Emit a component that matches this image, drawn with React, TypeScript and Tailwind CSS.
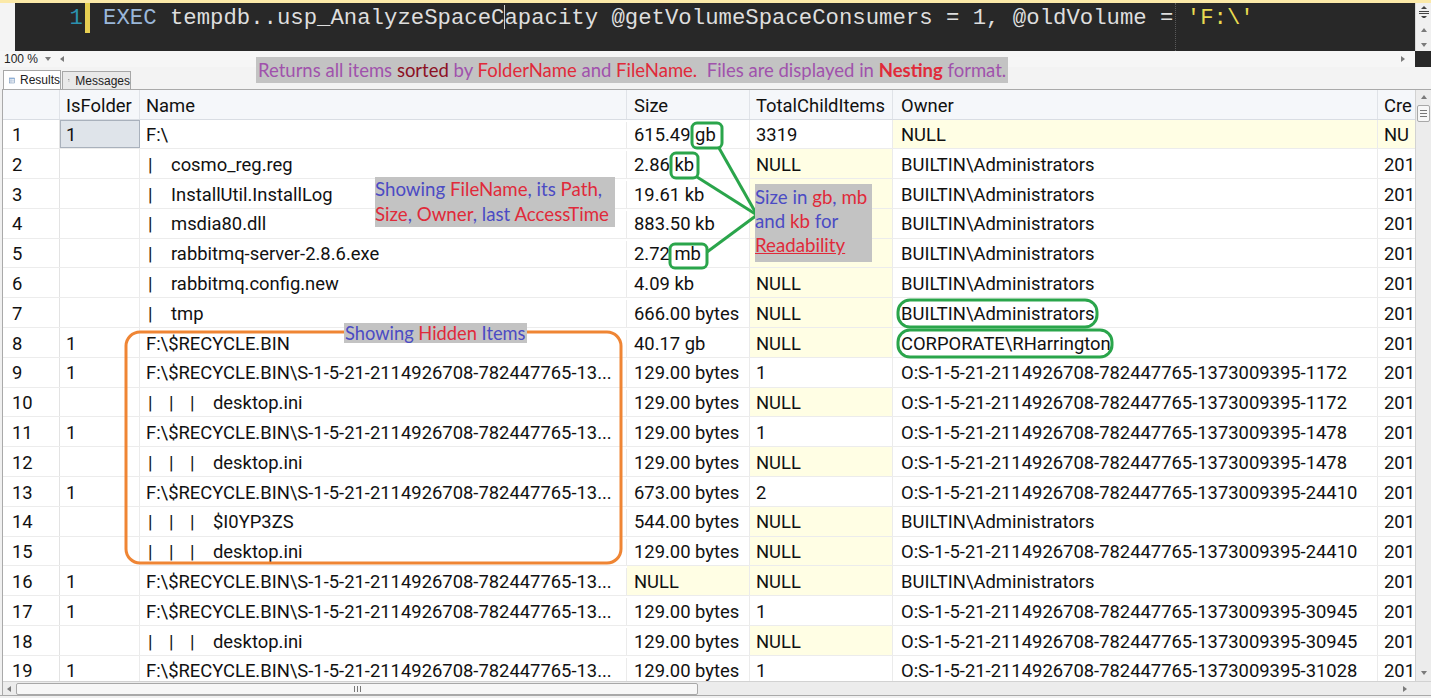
import React from "react";

type Row = {
  n: number;
  f?: string;
  pipes: number;
  name: string;
  size: string | null;
  tci: string | null;
  owner: string | null;
  cre: string | null;
  hideTci?: boolean;
};

const SID = "F:\\$RECYCLE.BIN\\S-1-5-21-2114926708-782447765-13...";
const O = (s: string) => "O:S-1-5-21-2114926708-782447765-1373009395-" + s;
const BA = "BUILTIN\\Administrators";

const rows: Row[] = [
  { n: 1, f: "1", pipes: 0, name: "F:\\", size: "615.49 gb", tci: "3319", owner: null, cre: null },
  { n: 2, pipes: 1, name: "cosmo_reg.reg", size: "2.86 kb", tci: null, owner: BA, cre: "201" },
  { n: 3, pipes: 1, name: "InstallUtil.InstallLog", size: "19.61 kb", tci: null, owner: BA, cre: "201", hideTci: true },
  { n: 4, pipes: 1, name: "msdia80.dll", size: "883.50 kb", tci: null, owner: BA, cre: "201", hideTci: true },
  { n: 5, pipes: 1, name: "rabbitmq-server-2.8.6.exe", size: "2.72 mb", tci: null, owner: BA, cre: "201", hideTci: true },
  { n: 6, pipes: 1, name: "rabbitmq.config.new", size: "4.09 kb", tci: null, owner: BA, cre: "201" },
  { n: 7, pipes: 1, name: "tmp", size: "666.00 bytes", tci: null, owner: BA, cre: "201" },
  { n: 8, f: "1", pipes: 0, name: "F:\\$RECYCLE.BIN", size: "40.17 gb", tci: null, owner: "CORPORATE\\RHarrington", cre: "201" },
  { n: 9, f: "1", pipes: 0, name: SID, size: "129.00 bytes", tci: "1", owner: O("1172"), cre: "201" },
  { n: 10, pipes: 3, name: "desktop.ini", size: "129.00 bytes", tci: null, owner: O("1172"), cre: "201" },
  { n: 11, f: "1", pipes: 0, name: SID, size: "129.00 bytes", tci: "1", owner: O("1478"), cre: "201" },
  { n: 12, pipes: 3, name: "desktop.ini", size: "129.00 bytes", tci: null, owner: O("1478"), cre: "201" },
  { n: 13, f: "1", pipes: 0, name: SID, size: "673.00 bytes", tci: "2", owner: O("24410"), cre: "201" },
  { n: 14, pipes: 3, name: "$I0YP3ZS", size: "544.00 bytes", tci: null, owner: BA, cre: "201" },
  { n: 15, pipes: 3, name: "desktop.ini", size: "129.00 bytes", tci: null, owner: O("24410"), cre: "201" },
  { n: 16, f: "1", pipes: 0, name: SID, size: null, tci: null, owner: BA, cre: "201" },
  { n: 17, f: "1", pipes: 0, name: SID, size: "129.00 bytes", tci: "1", owner: O("30945"), cre: "201" },
  { n: 18, pipes: 3, name: "desktop.ini", size: "129.00 bytes", tci: null, owner: O("30945"), cre: "201" },
  { n: 19, f: "1", pipes: 0, name: SID, size: "129.00 bytes", tci: "1", owner: O("31028"), cre: "201" },
];

const B = "text-[#4b4bc4]";
const R = "text-[#e02a3a]";
const P = "text-[#a052ac]";

function Tri({ dir, className }: { dir: "up" | "down" | "left" | "right"; className?: string }) {
  const pts =
    dir === "up" ? "1,5 4,1 7,5" : dir === "down" ? "1,2 4,6 7,2" : dir === "left" ? "5,1 1,4 5,7" : "2,1 6,4 2,7";
  return (
    <svg width="8" height="8" viewBox="0 0 8 8" className={className}>
      <polygon points={pts} fill="#7a7a7a" />
    </svg>
  );
}

function NameCell({ r }: { r: Row }) {
  const pipes = [];
  for (let i = 0; i < r.pipes; i++) {
    pipes.push(
      <span key={i} className={i === r.pipes - 1 ? "inline-block w-[23px]" : "inline-block w-[21px]"}>
        |
      </span>
    );
  }
  return (
    <div
      className={
        "w-[487px] shrink-0 border-r border-[#ebebeb] flex items-center whitespace-nowrap overflow-hidden " +
        (r.pipes > 0 ? "pl-[8px]" : "pl-[6px]")
      }
    >
      {pipes}
      <span>{r.name}</span>
    </div>
  );
}

function GridRow({ r }: { r: Row }) {
  const nullBg = "bg-[#fffee4]";
  return (
    <div className="flex h-[29.8px] border-b border-[#ececec] text-[18.4px] text-[#111]">
      <div className="w-[57px] shrink-0 border-r border-[#e3e3e3] pl-[9px] pt-[2px] flex items-center">{r.n}</div>
      <div
        className={
          r.n === 1
            ? "w-[80px] shrink-0 border border-[#a9b1bc] bg-[#dfe4ea] pl-[5px] pt-[2px] flex items-center"
            : "w-[80px] shrink-0 border-r border-[#ebebeb] pl-[6px] pt-[2px] flex items-center"
        }
      >
        {r.f ?? ""}
      </div>
      <div className="flex pt-[2px] shrink-0">
        <NameCell r={r} />
      </div>
      <div
        className={
          "w-[123px] shrink-0 border-r border-[#ebebeb] pl-[7px] pt-[2px] flex items-center whitespace-nowrap overflow-hidden " +
          (r.size === null ? nullBg : "")
        }
      >
        {r.size ?? "NULL"}
      </div>
      <div
        className={
          "w-[143px] shrink-0 border-r border-[#ebebeb] pl-[6px] pt-[2px] flex items-center whitespace-nowrap " +
          (r.tci === null ? nullBg : "")
        }
      >
        {r.hideTci ? "" : r.tci ?? "NULL"}
      </div>
      <div
        className={
          "w-[485px] shrink-0 border-r border-[#ebebeb] pl-[8px] pt-[2px] flex items-center whitespace-nowrap overflow-hidden " +
          (r.owner === null ? nullBg : "")
        }
      >
        {r.owner ?? "NULL"}
      </div>
      <div
        className={
          "w-[37px] shrink-0 pl-[6px] pt-[2px] flex items-center whitespace-nowrap overflow-hidden " +
          (r.cre === null ? nullBg : "")
        }
      >
        {r.cre ?? "NU"}
      </div>
    </div>
  );
}

function Header() {
  return (
    <div className="flex h-[29.5px] bg-[#f5f7fa] border-b border-[#d9dde3] text-[18.4px] text-[#111]">
      <div className="w-[57px] shrink-0 border-r border-[#e0e3e8]" />
      <div className="w-[80px] shrink-0 border-r border-[#e0e3e8] pl-[6px] pt-[3px] flex items-center">IsFolder</div>
      <div className="w-[487px] shrink-0 border-r border-[#e0e3e8] pl-[6px] pt-[3px] flex items-center">Name</div>
      <div className="w-[123px] shrink-0 border-r border-[#e0e3e8] pl-[7px] pt-[3px] flex items-center">Size</div>
      <div className="w-[143px] shrink-0 border-r border-[#e0e3e8] pl-[6px] pt-[3px] flex items-center whitespace-nowrap overflow-hidden">TotalChildItems</div>
      <div className="w-[485px] shrink-0 border-r border-[#e0e3e8] pl-[8px] pt-[3px] flex items-center">Owner</div>
      <div className="w-[37px] shrink-0 pl-[6px] pt-[3px] flex items-center overflow-hidden whitespace-nowrap">Cre</div>
    </div>
  );
}

function ResultsIcon() {
  return (
    <svg width="12" height="11" viewBox="0 0 12 11">
      <rect x="0.5" y="0.5" width="11" height="10" fill="#fff" stroke="#5b7ea8" />
      <rect x="0.5" y="0.5" width="11" height="2.5" fill="#8eb0d8" />
      <line x1="0.5" y1="5.5" x2="11.5" y2="5.5" stroke="#9fb5cf" />
      <line x1="0.5" y1="8" x2="11.5" y2="8" stroke="#9fb5cf" />
      <line x1="4" y1="3" x2="4" y2="10.5" stroke="#9fb5cf" />
    </svg>
  );
}

function MessagesIcon() {
  return (
    <svg width="13" height="13" viewBox="0 0 13 13">
      <rect x="0.5" y="2.5" width="8" height="10" fill="#fff" stroke="#8a8a8a" />
      <rect x="3.5" y="0.5" width="8" height="10" fill="#f4f4f4" stroke="#8a8a8a" />
      <line x1="5" y1="3.5" x2="10" y2="3.5" stroke="#9a9a9a" />
      <line x1="5" y1="5.5" x2="10" y2="5.5" stroke="#9a9a9a" />
      <line x1="5" y1="7.5" x2="10" y2="7.5" stroke="#9a9a9a" />
    </svg>
  );
}

export default function App() {
  return (
    <div className="relative w-[1431px] h-[698px] overflow-hidden bg-[#f0f0f0] font-['Roboto','Open_Sans',sans-serif]">
      {/* top yellow strip */}
      <div className="h-[3px] bg-[#fbe9a8]" />

      {/* editor */}
      <div className="flex h-[48px]">
        <div className="w-[15px] bg-[#f4f4f4]" />
        <div className="relative flex-1 bg-[#282828] flex items-start font-['Liberation_Mono',monospace] text-[22.3px] leading-[31px]">
          <div className="w-[68px] text-right text-[#2b91af]">1</div>
          <div className="ml-[2px] w-[5px] h-[30px] bg-[#e7cf52]" />
          <div className="ml-[13px] whitespace-pre text-[#dedede]">
            <span className="text-[#9ab7d9]">EXEC</span> tempdb..usp_AnalyzeSpaceC
            <span className="inline-block w-px h-[24px] bg-[#cfcfcf] -mr-px align-[-5px]" />
            apacity @getVolumeSpaceConsumers = 1, @oldVolume = <span className="text-[#e8da50]">'F:\'</span>
          </div>
          <div className="absolute left-[1160px] top-0 h-[48px] border-l border-dotted border-[#5a5a5a]" />
        </div>
        <div className="w-[16px] bg-[#f0f0f0] border-l border-[#d8d8d8] flex flex-col items-center">
          <svg width="12" height="12" viewBox="0 0 12 12" className="mt-[3px]">
            <line x1="1" y1="5.5" x2="11" y2="5.5" stroke="#444" />
            <line x1="1" y1="7.5" x2="11" y2="7.5" stroke="#444" />
            <polygon points="3,3 6,0 9,3" fill="#444" />
            <polygon points="3,10 6,13 9,10" fill="#444" />
          </svg>
          <Tri dir="up" className="mt-[9px]" />
          <Tri dir="down" className="mt-[6px]" />
        </div>
      </div>

      {/* zoom / horizontal bar */}
      <div className="flex h-[16px] bg-[#f6f6f6] items-center text-[12px] text-[#222] font-['Liberation_Sans',sans-serif]">
        <div className="ml-[3px] w-[52px] h-[15px] flex items-center justify-between pr-[3px]">
          <span className="ml-[1px]">100 %</span>
          <Tri dir="down" />
        </div>
        <Tri dir="left" className="ml-[4px]" />
        <div className="flex-1" />
        <Tri dir="right" className="mr-[8px]" />
        <div className="w-[16px] h-[16px] bg-[#282828]" />
      </div>

      {/* tabs */}
      <div className="flex h-[22px] items-end pl-[3px] bg-[#f3f3f3] text-[12px] text-[#222] font-['Liberation_Sans',sans-serif]">
        <div className="h-[19px] w-[58px] bg-white border border-b-0 border-[#a7a7a7] flex items-center gap-[5px] pl-[5px]">
          <ResultsIcon />
          <span>Results</span>
        </div>
        <div className="ml-px h-[18px] w-[69px] bg-[#e9e9e9] border border-b-0 border-[#a7a7a7] flex items-center gap-[5px] pl-[5px]">
          <MessagesIcon />
          <span>Messages</span>
        </div>
      </div>

      {/* results grid */}
      <div className="ml-[2px] h-[606px] border-l border-t border-[#a9a9a9] bg-white flex flex-col">
        <div className="flex h-[591px]">
          <div className="w-[1412px] overflow-hidden">
            <Header />
            {rows.map((r) => (
              <GridRow key={r.n} r={r} />
            ))}
          </div>
          <div className="w-[16px] bg-[#ececec] border-l border-[#d2d2d2] flex flex-col items-center">
            <Tri dir="up" className="mt-[4px]" />
            <div className="mt-[3px] w-[13px] h-[17px] bg-[#f7f7f7] border border-[#a8a8a8] rounded-[2px] flex flex-col items-center justify-center gap-[2px]">
              <div className="w-[7px] h-px bg-[#777]" />
              <div className="w-[7px] h-px bg-[#777]" />
              <div className="w-[7px] h-px bg-[#777]" />
            </div>
            <div className="flex-1" />
            <Tri dir="down" className="mb-[4px]" />
          </div>
        </div>
        <div className="flex h-[15px] border-t border-[#d2d2d2]">
          <div className="w-[1412px] bg-[#ececec] flex items-center">
            <Tri dir="left" className="ml-[3px]" />
            <div className="ml-[2px] w-[682px] h-[12px] bg-[#f7f7f7] border border-[#a8a8a8] rounded-[2px] flex items-center justify-center gap-[2px]">
              <div className="w-px h-[6px] bg-[#777]" />
              <div className="w-px h-[6px] bg-[#777]" />
              <div className="w-px h-[6px] bg-[#777]" />
            </div>
            <div className="flex-1" />
            <Tri dir="right" className="mr-[6px]" />
          </div>
          <div className="w-[16px] bg-[#ececec]" />
        </div>
      </div>
      <div className="h-[4px] border-t border-[#a9a9a9] bg-[#f0f0f0]" />

      {/* annotation shapes */}
      <svg className="absolute left-0 top-0 pointer-events-none" width="1431" height="698" viewBox="0 0 1431 698">
        <g fill="none" stroke="#2aa54b" strokeWidth="3" strokeLinejoin="round">
          <rect x="692" y="123" width="30" height="25" rx="5" />
          <rect x="671" y="153" width="27" height="25" rx="5" />
          <rect x="670" y="244" width="37" height="24" rx="5" />
          <line x1="719" y1="148" x2="757" y2="215" />
          <line x1="697" y1="177" x2="757" y2="215" />
          <line x1="707" y1="252" x2="757" y2="215" />
          <rect x="898" y="300" width="199" height="27" rx="12" />
          <rect x="898" y="330" width="214" height="27" rx="12" />
        </g>
        <rect x="126" y="332" width="495" height="231" rx="14" fill="none" stroke="#ef8534" strokeWidth="3" />
      </svg>

      {/* top annotation */}
      <div className="absolute left-[256px] top-[57px] w-[752px] h-[26px] bg-[#c3c3c3] font-['Lato',sans-serif] text-[18.5px] leading-[26px] whitespace-pre pl-[2px]">
        <span className={P}>Returns all items </span>
        <span className="text-[#8c1024]">sorted</span>
        <span className={P}> by </span>
        <span className={R}>FolderName</span>
        <span className={P}> and </span>
        <span className={R}>FileName.</span>
        <span className={P}>  Files are displayed in </span>
        <span className={R + " font-bold"}>Nesting</span>
        <span className={P}> format.</span>
      </div>

      {/* showing filename annotation */}
      <div className="absolute left-[375px] top-[177px] w-[240px] h-[50px] bg-[#c3c3c3] font-['Lato',sans-serif] text-[18.7px] leading-[25px] whitespace-pre overflow-hidden">
        <div>
          <span className={B}>Showing </span>
          <span className={R}>FileName</span>
          <span className={B}>, its </span>
          <span className={R}>Path</span>
          <span className={B}>,</span>
        </div>
        <div>
          <span className={R}>Size</span>
          <span className={B}>, </span>
          <span className={R}>Owner</span>
          <span className={B}>, last </span>
          <span className={R}>AccessTime</span>
        </div>
      </div>

      {/* size annotation */}
      <div className="absolute left-[755px] top-[184px] w-[117px] h-[78px] bg-[#c3c3c3] font-['Lato',sans-serif] text-[18.7px] leading-[24px] pt-[1px] whitespace-pre overflow-hidden">
        <div>
          <span className={B}>Size in </span>
          <span className={R}>gb</span>
          <span className={B}>, </span>
          <span className={R}>mb</span>
        </div>
        <div>
          <span className={B}>and </span>
          <span className={R}>kb</span>
          <span className={B}> for</span>
        </div>
        <div>
          <span className={R + " underline"}>Readability</span>
        </div>
      </div>

      {/* hidden items label */}
      <div className="absolute left-[344px] top-[323px] h-[20px] bg-[#c3c3c3] font-['Lato',sans-serif] text-[18.3px] leading-[20px] whitespace-pre px-px">
        <span className={B}>Showing </span>
        <span className={R}>Hidden</span>
        <span className={B}> Items</span>
      </div>
    </div>
  );
}
